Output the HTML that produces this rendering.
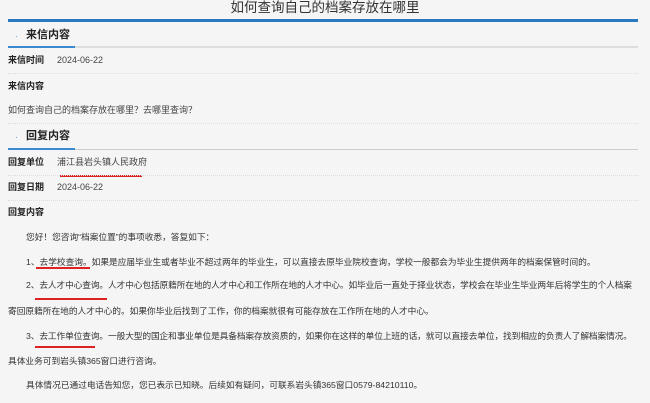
<!DOCTYPE html>
<html><head><meta charset="utf-8"><style>
body{margin:0;width:650px;height:403px;background:#f5f5f5;font-family:"Liberation Sans","Noto Sans CJK SC",sans-serif;color:#333;position:relative;overflow:hidden}
.a{position:absolute;white-space:nowrap;line-height:1}
.t{left:0;width:650px;text-align:center;top:0;font-size:13.5px;color:#333}
.h{font-size:11px;font-weight:bold;color:#222}
.l{font-size:9px;font-weight:bold;color:#222}
.v{font-size:9px;color:#444}
.p{font-size:8.7px;color:#333}
.red{position:absolute;height:1.5px;background:#d22}
</style></head><body>
<div class="a t" style="top:1px">如何查询自己的档案存放在哪里</div>
<div style="position:absolute;left:8px;top:19px;width:630px;height:3px;background:#2a78c0"></div>

<div class="a" style="left:15px;top:33px;font-size:8px;color:#2a78c0">·</div>
<div class="a h" style="left:26px;top:30px">来信内容</div>
<div style="position:absolute;left:8px;top:46px;width:630px;height:2px;background:#ddd"></div>
<div style="position:absolute;left:8px;top:46px;width:67px;height:2px;background:#3a8ad0"></div>

<div class="a l" style="left:8px;top:56px">来信时间</div>
<div class="a v" style="left:57px;top:56px">2024-06-22</div>
<div style="position:absolute;left:8px;top:73px;width:630px;border-top:1px dotted #ddd"></div>
<div class="a l" style="left:8px;top:82px">来信内容</div>
<div class="a v" style="left:8px;top:106px">如何查询自己的档案存放在哪里？去哪里查询？</div>
<div style="position:absolute;left:8px;top:123px;width:630px;border-top:1px dotted #ddd"></div>

<div class="a" style="left:15px;top:134px;font-size:8px;color:#2a78c0">·</div>
<div class="a h" style="left:26px;top:131px">回复内容</div>
<div style="position:absolute;left:8px;top:149px;width:630px;height:1px;background:#ccc"></div>
<div style="position:absolute;left:8px;top:148px;width:67px;height:2px;background:#3a8ad0"></div>

<div class="a l" style="left:8px;top:158px">回复单位</div>
<div class="a v" style="left:57px;top:158px">浦江县岩头镇人民政府</div>
<div class="red" style="left:60px;top:175px;width:82px"></div>
<div style="position:absolute;left:8px;top:175px;width:630px;border-top:1px dotted #ddd"></div>
<div class="a l" style="left:8px;top:183px">回复日期</div>
<div class="a v" style="left:57px;top:183px">2024-06-22</div>
<div style="position:absolute;left:8px;top:200px;width:630px;border-top:1px dotted #ddd"></div>
<div class="a l" style="left:8px;top:208px">回复内容</div>

<div class="a p" style="left:26px;top:233px">您好！您咨询“档案位置”的事项收悉，答复如下：</div>
<div class="a p" style="left:26px;top:258px">1、去学校查询。如果是应届毕业生或者毕业不超过两年的毕业生，可以直接去原毕业院校查询，学校一般都会为毕业生提供两年的档案保管时间的。</div>
<div class="red" style="left:36px;top:267px;width:54px"></div>
<div class="a p" style="left:26px;top:281px;letter-spacing:-0.1px">2、去人才中心查询。人才中心包括原籍所在地的人才中心和工作所在地的人才中心。如毕业后一直处于择业状态，学校会在毕业生毕业两年后将学生的个人档案</div>
<div class="red" style="left:35px;top:298px;width:72px"></div>
<div class="a p" style="left:8px;top:307px">寄回原籍所在地的人才中心的。如果你毕业后找到了工作，你的档案就很有可能存放在工作所在地的人才中心。</div>
<div class="a p" style="left:26px;top:332px;letter-spacing:-0.1px">3、去工作单位查询。一般大型的国企和事业单位是具备档案存放资质的，如果你在这样的单位上班的话，就可以直接去单位，找到相应的负责人了解档案情况。</div>
<div class="red" style="left:35px;top:346px;width:60px"></div>
<div class="a p" style="left:8px;top:357px">具体业务可到岩头镇365窗口进行咨询。</div>
<div class="a p" style="left:26px;top:381px">具体情况已通过电话告知您，您已表示已知晓。后续如有疑问，可联系岩头镇365窗口0579-84210110。</div>
</body></html>
